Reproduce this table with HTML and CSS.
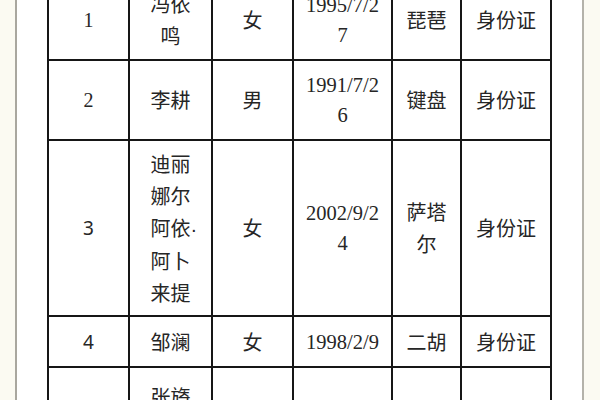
FILE: index.html
```html
<!DOCTYPE html>
<html lang="zh-CN">
<head>
<meta charset="utf-8">
<title>名单</title>
<link rel="stylesheet" href="styles.css">
</head>
<body>
<div class="page">
  <table class="roster">
    <colgroup>
      <col class="c-no"><col class="c-name"><col class="c-sex"><col class="c-date"><col class="c-inst"><col class="c-id">
    </colgroup>
    <tbody>
      <tr class="r2">
        <td class="num serif">1</td><td class="cjk">冯依鸣</td><td class="cjk">女</td><td class="date">1995/7/27</td><td class="cjk">琵琶</td><td class="cjk">身份证</td>
      </tr>
      <tr class="r2">
        <td class="num serif">2</td><td class="cjk">李耕</td><td class="cjk">男</td><td class="date">1991/7/26</td><td class="cjk">键盘</td><td class="cjk">身份证</td>
      </tr>
      <tr class="r5">
        <td class="num">3</td><td class="cjk">迪丽<br>娜尔<br>阿依<span class="dot">·</span><br>阿卜<br>来提</td><td class="cjk">女</td><td class="date">2002/9/24</td><td class="cjk">萨塔尔</td><td class="cjk">身份证</td>
      </tr>
      <tr class="r1">
        <td class="num">4</td><td class="cjk">邹澜</td><td class="cjk">女</td><td class="date">1998/2/9</td><td class="cjk">二胡</td><td class="cjk">身份证</td>
      </tr>
      <tr class="r3">
        <td class="num">5</td><td class="cjk">张旖旎</td><td class="cjk">女</td><td class="date">1997/5/8</td><td class="cjk">古筝</td><td class="cjk">身份证</td>
      </tr>
    </tbody>
  </table>
</div>
</body>
</html>
```
FILE: styles.css
```css
html, body {
  margin: 0;
  padding: 0;
  height: 100%;
  overflow: hidden;
  background: #fbfaf2;
}
.page {
  display: flow-root;
  margin-left: 15px;
  width: 565px;
  height: 100%;
  background: #ffffff;
  border-left: 2px solid #a9a79f;
  border-right: 2px solid #b4b2aa;
}
.roster {
  margin-left: 30px;
  margin-top: -21px;
  border-collapse: separate;
  border-spacing: 0;
  table-layout: fixed;
  width: 505px;
  border-left: 2px solid #161616;
  border-top: 2px solid #161616;
  color: #262626;
  font-size: 20px;
}
.c-no { width: 81px; }
.c-name { width: 83px; }
.c-sex { width: 81px; }
.c-date { width: 99px; }
.c-inst { width: 69px; }
.c-id { width: 90px; }
.roster td {
  box-sizing: border-box;
  border-right: 2px solid #161616;
  border-bottom: 2px solid #161616;
  text-align: center;
  vertical-align: middle;
  padding: 0 9px;
  font-family: "Noto Sans CJK SC", "Noto Sans", sans-serif;
  line-height: 32px;
  word-break: break-all;
}
.roster td:nth-child(2) { padding: 0 13px; }
.dot {
  font-family: "Liberation Sans", sans-serif;
  display: inline-block;
  width: 8px;
  margin-right: -8px;
  text-align: left;
}
.r1 { height: 51px; }
.r2 { height: 80px; }
.r3 { height: 92px; }
.r5 { height: 176px; }
.roster td.date {
  font-family: "Liberation Serif", "Times New Roman", serif;
  font-size: 20.5px;
  line-height: 30px;
  padding: 0 8px;
}
.roster td.num { font-family: "Noto Sans", "Liberation Sans", sans-serif; font-size: 19px; }
.roster td.serif { font-family: "Liberation Serif", serif; font-size: 20px; }
```
